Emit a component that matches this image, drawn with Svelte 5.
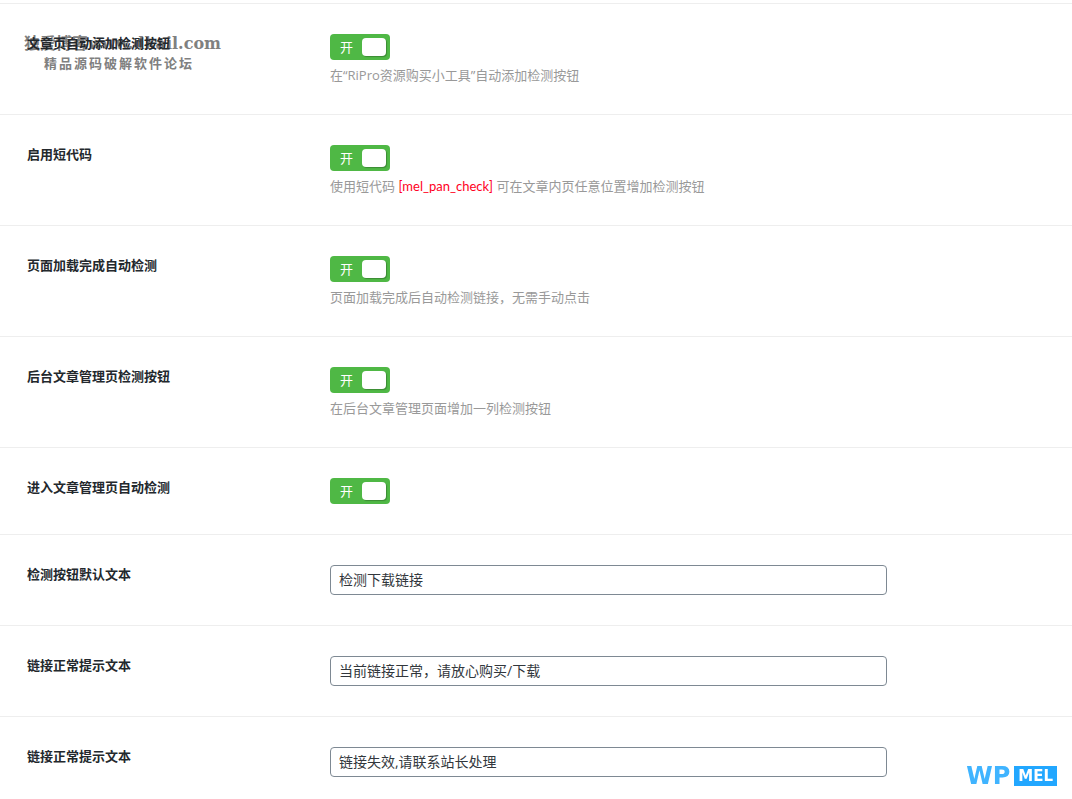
<script>
	let switches = [
		{ id: 'auto-button', title: '文章页自动添加检测按钮', on: true, desc: '在“RiPro资源购买小工具”自动添加检测按钮' },
		{ id: 'shortcode', title: '启用短代码', on: true, desc: '使用短代码 ', code: '[mel_pan_check]', after: ' 可在文章内页任意位置增加检测按钮' },
		{ id: 'auto-check', title: '页面加载完成自动检测', on: true, desc: '页面加载完成后自动检测链接，无需手动点击' },
		{ id: 'admin-column', title: '后台文章管理页检测按钮', on: true, desc: '在后台文章管理页面增加一列检测按钮' },
		{ id: 'admin-check', title: '进入文章管理页自动检测', on: true }
	];

	let texts = [
		{ id: 'text-default', title: '检测按钮默认文本', value: '检测下载链接' },
		{ id: 'text-ok', title: '链接正常提示文本', value: '当前链接正常，请放心购买/下载' },
		{ id: 'text-fail', title: '链接正常提示文本', value: '链接失效,请联系站长处理' }
	];
</script>

<form class="options">
	{#each switches as item}
		<div class="field">
			<label class="title" for={item.id}>{item.title}</label>
			<div class="control">
				<label class="switcher" class:on={item.on}>
					<input id={item.id} type="checkbox" bind:checked={item.on} />
					<span class="state">{item.on ? '开' : '关'}</span>
					<span class="ball"></span>
				</label>
				{#if item.desc}
					<p class="desc">{item.desc}{#if item.code}<span class="code">{item.code}</span>{item.after}{/if}</p>
				{/if}
			</div>
		</div>
	{/each}

	{#each texts as item}
		<div class="field">
			<label class="title" for={item.id}>{item.title}</label>
			<div class="control">
				<input class="text" id={item.id} type="text" bind:value={item.value} />
			</div>
		</div>
	{/each}
</form>

<div class="watermark">
	<div class="site">独爱博客www.dkail.com</div>
	<div class="slogan">精品源码破解软件论坛</div>
</div>

<div class="logo">
	<span class="wp">WP</span>
	<span class="mel">MEL</span>
</div>

<style>
	:global(body) {
		background: #fff;
		overflow-x: hidden;
	}

	.options {
		padding-top: 3px;
		font-family: 'Open Sans', 'Noto Sans CJK SC', sans-serif;
		font-size: 13px;
	}

	.field {
		display: grid;
		grid-template-columns: 300px 1fr;
		column-gap: 3px;
		padding: 30px 27px;
		border-top: 1px solid #eee;
	}

	.title {
		align-self: start;
		color: #23282d;
		font-weight: 600;
		line-height: 18px;
	}

	.control {
		display: flex;
		flex-direction: column;
		align-items: flex-start;
	}

	.switcher {
		display: flex;
		align-items: center;
		justify-content: space-between;
		box-sizing: border-box;
		width: 60px;
		height: 26px;
		padding: 0 4px 0 10px;
		border-radius: 4px;
		background: #999;
		color: #fff;
		cursor: pointer;
		position: relative;
	}

	.switcher.on {
		background: #4fb845;
	}

	.switcher input {
		position: absolute;
		opacity: 0;
		margin: 0;
	}

	.state {
		line-height: 26px;
	}

	.ball {
		width: 24px;
		height: 18px;
		border-radius: 4px;
		background: #fff;
		box-shadow: 1px 1px 1px rgba(0, 0, 0, 0.25);
	}

	.desc {
		margin: 6px 0 0;
		line-height: 18px;
		color: #999;
	}

	.code {
		color: #ff0022;
		font-family: Lato, sans-serif;
	}

	.text {
		box-sizing: border-box;
		width: 100%;
		max-width: 557px;
		height: 30px;
		margin: 0;
		padding: 0 8px 2px;
		border: 1px solid #7e8993;
		border-radius: 4px;
		background: #fff;
		color: #32373c;
		font-family: inherit;
		font-size: 14px;
	}

	.watermark {
		position: absolute;
		top: 34px;
		left: 24px;
		color: #808080;
		font-family: 'DejaVu Serif', 'Noto Sans CJK SC', serif;
		font-weight: bold;
		line-height: 20px;
		pointer-events: none;
		z-index: -1;
	}

	.site {
		font-size: 16px;
	}

	.slogan {
		padding-left: 20px;
		font-size: 13px;
		letter-spacing: 2px;
	}

	.logo {
		position: fixed;
		right: 15px;
		bottom: 13px;
		display: flex;
		align-items: center;
		gap: 4px;
		font-family: 'DejaVu Sans', sans-serif;
		font-weight: bold;
		line-height: 20px;
	}

	.wp {
		color: #40b4ff;
		font-size: 24px;
	}

	.mel {
		padding: 0 4px;
		background: #22a7ff;
		color: #fff;
		font-size: 15px;
	}
</style>
